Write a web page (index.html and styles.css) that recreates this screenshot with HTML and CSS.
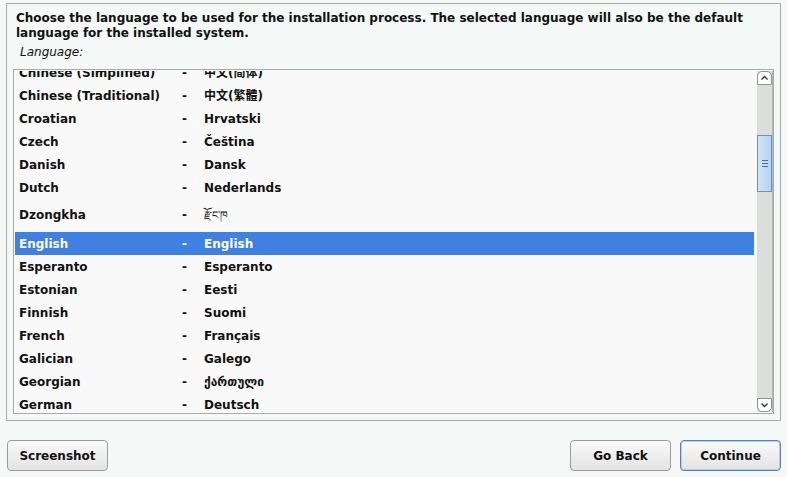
FILE: index.html
```html
<!DOCTYPE html>
<html lang="en">
<head>
<meta charset="utf-8">
<title>Select a language</title>
<link rel="stylesheet" href="styles.css">
</head>
<body>
<div class="panel">
  <p class="intro">Choose the language to be used for the installation process. The selected language will also be the default language for the installed system.</p>
  <div class="label">Language:</div>
  <div class="listbox">
    <div class="viewport">
      <div class="rows">
        <div class="row"><span class="name">Chinese (Simplified)</span><span class="dash">-</span><span class="native">中文(简体)</span></div>
        <div class="row"><span class="name">Chinese (Traditional)</span><span class="dash">-</span><span class="native">中文(繁體)</span></div>
        <div class="row"><span class="name">Croatian</span><span class="dash">-</span><span class="native">Hrvatski</span></div>
        <div class="row"><span class="name">Czech</span><span class="dash">-</span><span class="native">Čeština</span></div>
        <div class="row"><span class="name">Danish</span><span class="dash">-</span><span class="native">Dansk</span></div>
        <div class="row"><span class="name">Dutch</span><span class="dash">-</span><span class="native">Nederlands</span></div>
        <div class="row tall"><span class="name">Dzongkha</span><span class="dash">-</span><span class="native thin">རྫོང་ཁ</span></div>
        <div class="row selected"><span class="name">English</span><span class="dash">-</span><span class="native">English</span></div>
        <div class="row"><span class="name">Esperanto</span><span class="dash">-</span><span class="native">Esperanto</span></div>
        <div class="row"><span class="name">Estonian</span><span class="dash">-</span><span class="native">Eesti</span></div>
        <div class="row"><span class="name">Finnish</span><span class="dash">-</span><span class="native">Suomi</span></div>
        <div class="row"><span class="name">French</span><span class="dash">-</span><span class="native">Français</span></div>
        <div class="row"><span class="name">Galician</span><span class="dash">-</span><span class="native">Galego</span></div>
        <div class="row"><span class="name">Georgian</span><span class="dash">-</span><span class="native">ქართული</span></div>
        <div class="row"><span class="name">German</span><span class="dash">-</span><span class="native">Deutsch</span></div>
      </div>
    </div>
    <div class="scrollbar">
      <div class="sb-btn sb-up"><svg width="9" height="6" viewBox="0 0 9 6"><path d="M1.5 4.5 L4.5 1.5 L7.5 4.5" fill="none" stroke="#333" stroke-width="1.3"/></svg></div>
      <div class="sb-track">
        <div class="sb-gap-top"></div>
        <div class="sb-thumb"><span class="grip"></span><span class="grip"></span><span class="grip"></span></div>
      </div>
      <div class="sb-btn sb-down"><svg width="9" height="6" viewBox="0 0 9 6"><path d="M1.5 1.5 L4.5 4.5 L7.5 1.5" fill="none" stroke="#333" stroke-width="1.3"/></svg></div>
    </div>
  </div>
</div>
<div class="buttons">
  <button class="btn">Screenshot</button>
  <div class="right">
    <button class="btn">Go Back</button>
    <button class="btn primary">Continue</button>
  </div>
</div>
</body>
</html>
```
FILE: styles.css
```css
html, body {
  margin: 0;
  padding: 0;
  background: #f4f8f6;
  font-family: "DejaVu Sans", "Noto Sans CJK SC", sans-serif;
  color: #111;
}
.panel {
  margin: 3px 6px 0 6px;
  height: 418px;
  border: 1px solid #a9aba9;
  background: #f4f8f6;
  box-sizing: border-box;
  padding: 7px 6px 0 6px;
}
.intro {
  margin: 0 0 0 3px;
  font-weight: bold;
  font-size: 12px;
  line-height: 15px;
}
.label {
  margin: 4px 0 0 7px;
  font-style: italic;
  font-size: 12px;
  line-height: 14px;
}
.listbox {
  margin-top: 10px;
  height: 345px;
  border: 1px solid #a9aba9;
  background: #f8f9f8;
  display: flex;
  box-sizing: border-box;
  padding: 1px 0 1px 1px;
}
.viewport {
  flex: 1;
  overflow: hidden;
  margin-right: 3px;
}
.rows {
  margin-top: -10px;
}
.row {
  display: grid;
  grid-template-columns: 163px 22px 1fr;
  box-sizing: border-box;
  height: 23px;
  padding-top: 2px;
  line-height: 21px;
  padding-left: 4px;
  font-size: 12px;
  font-weight: bold;
  white-space: nowrap;
}
.row.tall {
  height: 33px;
  line-height: 29px;
}
.row.selected {
  background: #3f80e0;
  color: #fff;
}
.native.thin {
  font-weight: normal;
  font-size: 11px;
}
.scrollbar {
  width: 15px;
  display: flex;
  flex-direction: column;
  background: #dcdedb;
  border-right: 1px solid #b4b6b4;
}
.sb-btn {
  height: 14px;
  background: #fdfdfd;
  border: 1px solid #8e918e;
  box-sizing: border-box;
  display: flex;
  align-items: center;
  justify-content: center;
}
.sb-up { border-radius: 5px 5px 0 0; }
.sb-down { border-radius: 0 0 5px 5px; }
.sb-track {
  flex: 1;
}
.sb-gap-top { height: 50px; }
.sb-thumb {
  height: 57px;
  box-sizing: border-box;
  border: 1px solid #6f90b3;
  background: linear-gradient(to right, #cfe3f8, #b5d3f1);
  display: flex;
  flex-direction: column;
  align-items: center;
  justify-content: center;
  gap: 2px;
}
.grip {
  width: 6px;
  height: 1px;
  background: #4d6f94;
}
.buttons {
  display: flex;
  justify-content: space-between;
  margin: 19px 6px 0 7px;
}
.right {
  display: flex;
  gap: 9px;
}
.btn {
  font-family: "DejaVu Sans", sans-serif;
  font-weight: bold;
  font-size: 12px;
  color: #111;
  height: 31px;
  width: 101px;
  border: 1px solid #9a9c9a;
  border-radius: 4px;
  background: linear-gradient(#fafafa, #e2e3e2);
  padding: 0;
}
.btn.primary {
  border-color: #5a7fb5;
  box-shadow: inset 0 0 0 1px #b9cdea;
}
```
